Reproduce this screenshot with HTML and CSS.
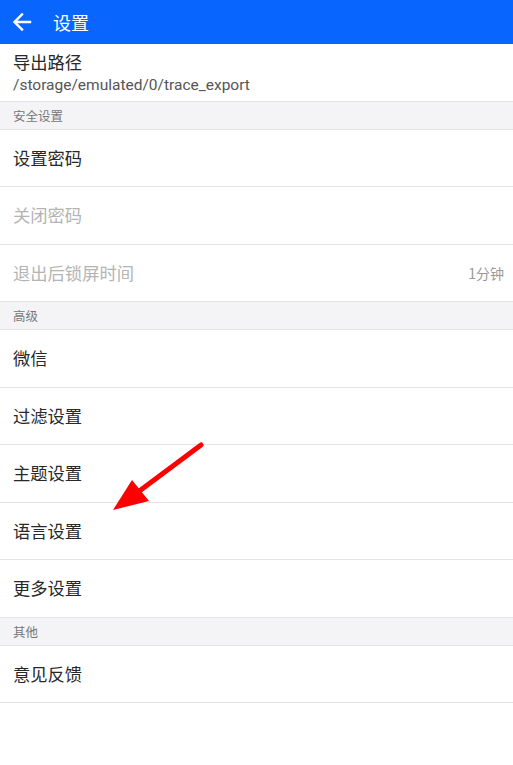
FILE: index.html
```html
<!DOCTYPE html>
<html lang="zh">
<head>
<meta charset="utf-8">
<link rel="stylesheet" href="styles.css">
</head>
<body>
<div class="page">
  <header class="appbar">
    <svg class="back" width="20" height="20" viewBox="0 0 20 20"><path d="M18 10H3M10 2.5L2.5 10 10 17.5" fill="none" stroke="#fff" stroke-width="2.4" stroke-linecap="square"/></svg>
    <span class="title">设置</span>
  </header>
  <div class="row two">
    <div class="main">导出路径</div>
    <div class="sub">/storage/emulated/0/trace_export</div>
  </div>
  <div class="section">安全设置</div>
  <div class="row"><div class="main">设置密码</div></div>
  <div class="row"><div class="main disabled">关闭密码</div></div>
  <div class="row"><div class="main disabled">退出后锁屏时间</div><div class="value">1分钟</div></div>
  <div class="section">高级</div>
  <div class="row"><div class="main">微信</div></div>
  <div class="row"><div class="main">过滤设置</div></div>
  <div class="row"><div class="main">主题设置</div></div>
  <div class="row"><div class="main">语言设置</div></div>
  <div class="row"><div class="main">更多设置</div></div>
  <div class="section">其他</div>
  <div class="row"><div class="main">意见反馈</div></div>
  <svg class="arrow" width="513" height="765" viewBox="0 0 513 765">
    <line x1="201" y1="445" x2="138" y2="492" stroke="#f00" stroke-width="5" stroke-linecap="round"/>
    <polygon points="113,510 132,480 149,501" fill="#f00"/>
  </svg>
</div>
</body>
</html>
```
FILE: styles.css
```css
html, body { margin: 0; padding: 0; background: #fff; }
body { font-family: "Noto Sans CJK SC", "Noto Sans", sans-serif; width: 513px; height: 765px; overflow: hidden; }
.page { position: relative; width: 513px; height: 765px; }
.appbar { height: 44px; background: #0866ff; display: flex; align-items: center; padding-left: 12px; }
.back { display: block; margin-right: 21px; }
.title { color: #fff; font-size: 18px; line-height: 24px; }
.row { height: 56.5px; border-bottom: 1px solid #e4e4e6; display: flex; align-items: center; padding: 0 9px 0 13px; justify-content: space-between; }
.row.two { flex-direction: column; align-items: flex-start; justify-content: center; }
.main { font-size: 17.3px; color: #282828; line-height: 22px; }
.two .main { margin-top: 1px; margin-bottom: 2px; }
.sub { font-size: 15.5px; color: #555; line-height: 20px; font-family: "Roboto", "Noto Sans CJK SC", sans-serif; }
.disabled { color: #b4b4b4; }
.value { font-size: 14px; color: #999; }
.section { height: 27px; background: #f4f4f6; border-bottom: 1px solid #e4e4e6; font-size: 12.5px; color: #777; padding-left: 13px; display: flex; align-items: center; }
.arrow { position: absolute; left: 0; top: 0; pointer-events: none; }
```
